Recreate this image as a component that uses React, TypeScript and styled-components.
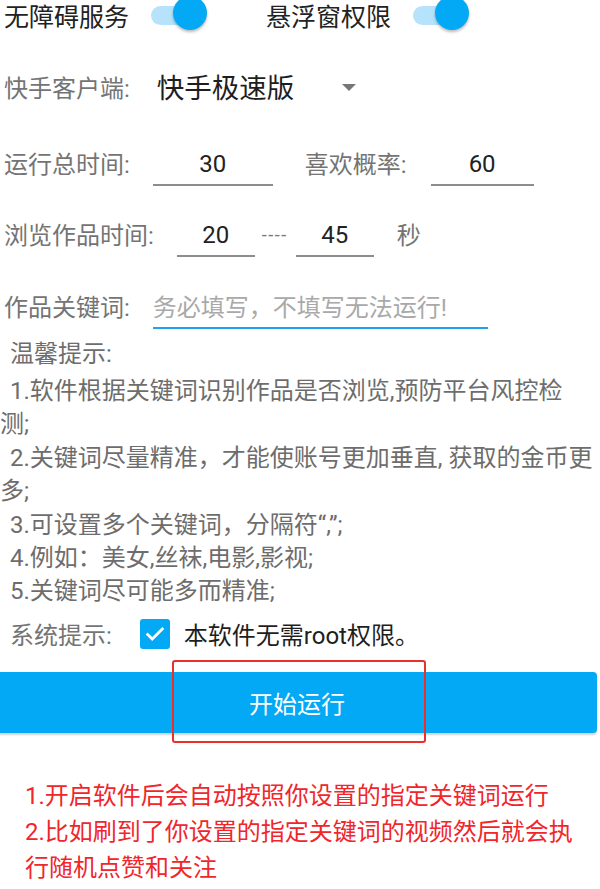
import styled, { createGlobalStyle } from 'styled-components';

const GlobalStyle = createGlobalStyle`
  html, body {
    margin: 0;
    padding: 0;
    background: #fff;
    overflow: hidden;
  }
  body {
    font-family: Roboto, "Noto Sans CJK SC", sans-serif;
    -webkit-font-smoothing: antialiased;
  }
`;

const blue = '#03a9f4';

const Page = styled.div`
  width: 600px;
  height: 889px;
  overflow: hidden;
  display: flex;
  flex-direction: column;
`;

const TopRow = styled.div`
  height: 30px;
  display: flex;
  align-items: center;
  padding-left: 4px;
`;

const ToggleLabel = styled.span<{ $gap?: number }>`
  font-size: 25px;
  color: #222;
  margin-left: ${(p) => p.$gap ?? 0}px;
  margin-right: 22px;
  white-space: nowrap;
`;

const Switch = styled.span`
  position: relative;
  width: 56px;
  height: 34px;
  flex: none;
`;

const Track = styled.span`
  position: absolute;
  left: 0;
  top: 8px;
  width: 50px;
  height: 19px;
  border-radius: 10px;
  background: #b6e3fb;
`;

const Thumb = styled.span`
  position: absolute;
  right: 0;
  top: -2px;
  width: 34px;
  height: 34px;
  border-radius: 50%;
  background: ${blue};
  box-shadow: 0 2px 3px rgba(0, 0, 0, 0.28);
`;

const Row = styled.div<{ $top: number }>`
  height: 44px;
  margin-top: ${(p) => p.$top}px;
  display: flex;
  align-items: center;
  padding-left: 4px;
`;

const Label = styled.span<{ $left?: number }>`
  font-size: 24px;
  color: #747474;
  white-space: nowrap;
  margin-left: ${(p) => p.$left ?? 0}px;
`;

const Spinner = styled.div`
  display: flex;
  align-items: center;
  margin-left: 27px;
`;

const SpinnerValue = styled.span`
  font-size: 27.5px;
  color: #1e1e1e;
`;

const Arrow = styled.span`
  margin-left: 48px;
  margin-top: 2px;
  width: 0;
  height: 0;
  border-left: 7px solid transparent;
  border-right: 7px solid transparent;
  border-top: 7px solid #777;
`;

const Field = styled.div<{ $width: number; $left: number; $focused?: boolean }>`
  align-self: flex-start;
  width: ${(p) => p.$width}px;
  height: 46px;
  margin-left: ${(p) => p.$left}px;
  box-sizing: border-box;
  border-bottom: 2px solid ${(p) => (p.$focused ? '#1ea4ee' : '#8d8d8d')};
  display: flex;
  align-items: center;
  justify-content: ${(p) => (p.$focused ? 'flex-start' : 'center')};
  padding-top: ${(p) => (p.$focused ? 0 : 4)}px;
  font-size: 24px;
  color: #222;
`;

const Placeholder = styled.span`
  color: #a9a9a9;
  white-space: nowrap;
`;

const Dash = styled.span`
  margin: 2px 8px 0 7px;
  font-size: 18px;
  color: #777;
  letter-spacing: 1.5px;
`;

const Tips = styled.div`
  margin-top: 10px;
  font-size: 24px;
  color: #6d6d6d;
  line-height: 33.4px;
`;

const TipTitle = styled.div`
  text-indent: 10px;
  line-height: 34px;
  margin-bottom: 4px;
`;

const Tip = styled.div`
  text-indent: 10px;
`;

const SystemRow = styled.div`
  margin-top: 8px;
  height: 34px;
  display: flex;
  align-items: center;
  padding-left: 10px;
`;

const CheckBox = styled.span`
  width: 30px;
  height: 30px;
  margin-left: 28px;
  margin-right: 14px;
  border-radius: 3px;
  background: ${blue};
  display: flex;
  align-items: center;
  justify-content: center;
`;

const CheckText = styled.span`
  font-size: 24px;
  color: #1e1e1e;
`;

const ButtonWrap = styled.div`
  position: relative;
  margin-top: 21px;
`;

const StartButton = styled.div`
  margin-left: -3px;
  width: 600px;
  height: 61px;
  border-radius: 4px;
  background: ${blue};
  box-shadow: 0 2px 2px rgba(0, 0, 0, 0.18);
  display: flex;
  align-items: center;
  justify-content: center;
  color: #fff;
  font-size: 24px;
`;

const Highlight = styled.div`
  position: absolute;
  left: 172px;
  top: -12px;
  width: 254px;
  height: 83px;
  box-sizing: border-box;
  border: 2.5px solid #e8302d;
  border-radius: 3px;
`;

const Notes = styled.div`
  margin-top: 45px;
  padding: 0 15px 0 25px;
  font-size: 24px;
  line-height: 36px;
  color: #f0262b;
`;

const Note = styled.div<{ $indent?: number }>`
  text-indent: ${(p) => p.$indent ?? 0}px;
`;

function Toggle() {
  return (
    <Switch>
      <Track />
      <Thumb />
    </Switch>
  );
}

export default function App() {
  return (
    <Page>
      <GlobalStyle />
      <TopRow>
        <ToggleLabel>无障碍服务</ToggleLabel>
        <Toggle />
        <ToggleLabel $gap={59}>悬浮窗权限</ToggleLabel>
        <Toggle />
      </TopRow>

      <Row $top={36}>
        <Label>快手客户端:</Label>
        <Spinner>
          <SpinnerValue>快手极速版</SpinnerValue>
          <Arrow />
        </Spinner>
      </Row>

      <Row $top={34}>
        <Label>运行总时间:</Label>
        <Field $width={120} $left={23}>30</Field>
        <Label $left={32}>喜欢概率:</Label>
        <Field $width={103} $left={24}>60</Field>
      </Row>

      <Row $top={27}>
        <Label>浏览作品时间:</Label>
        <Field $width={78} $left={23}>20</Field>
        <Dash>----</Dash>
        <Field $width={78} $left={0}>45</Field>
        <Label $left={23}>秒</Label>
      </Row>

      <Row $top={28}>
        <Label>作品关键词:</Label>
        <Field $width={335} $left={23} $focused>
          <Placeholder>务必填写，不填写无法运行!</Placeholder>
        </Field>
      </Row>

      <Tips>
        <TipTitle>温馨提示:</TipTitle>
        <Tip>
          1.软件根据关键词识别作品是否浏览,预防平台风控检
          <br />
          测;
        </Tip>
        <Tip>2.关键词尽量精准，才能使账号更加垂直, 获取的金币更多;</Tip>
        <Tip>3.可设置多个关键词，分隔符“,”;</Tip>
        <Tip>4.例如：美女,丝袜,电影,影视;</Tip>
        <Tip>5.关键词尽可能多而精准;</Tip>
      </Tips>

      <SystemRow>
        <Label>系统提示:</Label>
        <CheckBox>
          <svg width="22" height="22" viewBox="0 0 24 24" fill="none">
            <path d="M4 12.5l5 5L20 6.5" stroke="#fff" strokeWidth="3" strokeLinecap="square" />
          </svg>
        </CheckBox>
        <CheckText>本软件无需root权限。</CheckText>
      </SystemRow>

      <ButtonWrap>
        <StartButton>开始运行</StartButton>
        <Highlight />
      </ButtonWrap>

      <Notes>
        <Note>1.开启软件后会自动按照你设置的指定关键词运行</Note>
        <Note>2.比如刷到了你设置的指定关键词的视频然后就会执行随机点赞和关注</Note>
        <Note $indent={105}>请勿在运行时操作手机</Note>
      </Notes>
    </Page>
  );
}
